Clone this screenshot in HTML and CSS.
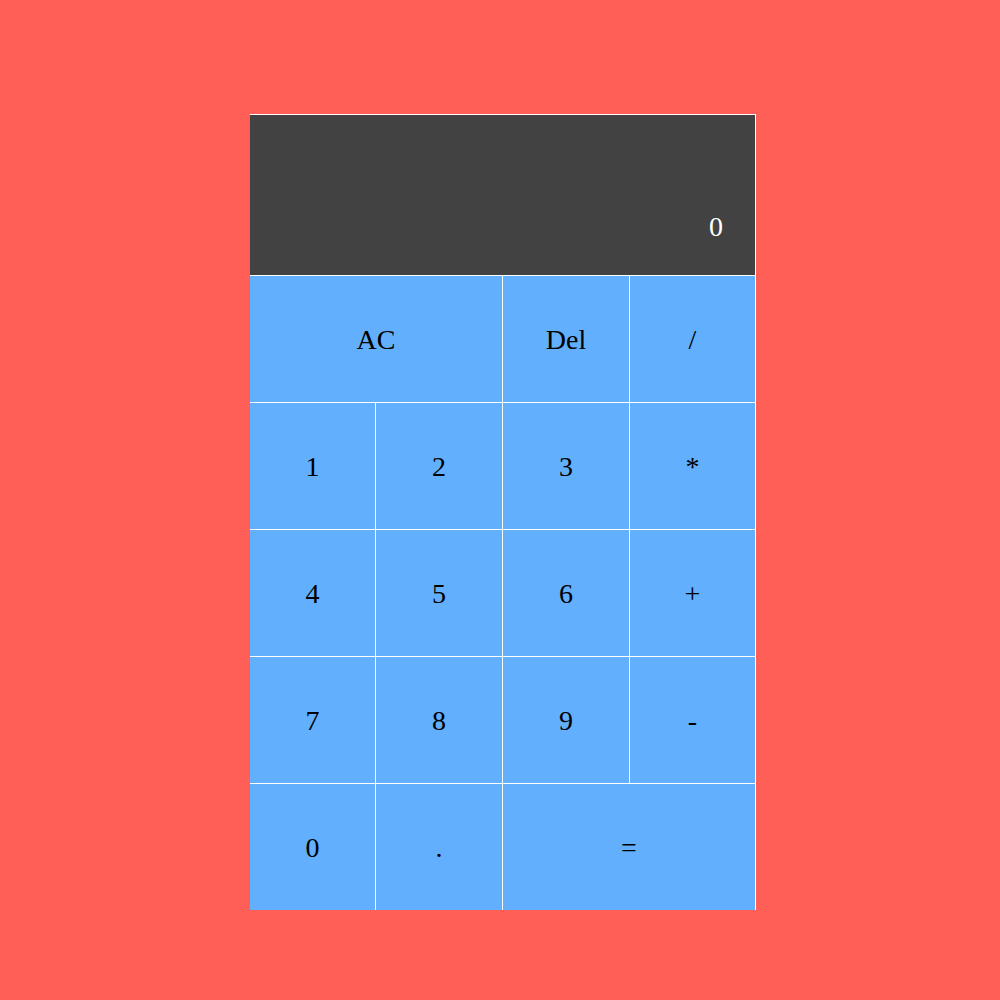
FILE: index.html
```html
<!DOCTYPE html>
<html>
<head>
<meta charset="utf-8">
<link rel="stylesheet" href="styles.css">
</head>
<body>
<div class="calc">
  <div class="display"><span class="current">0</span></div>
  <div class="key span2">AC</div>
  <div class="key">Del</div>
  <div class="key">/</div>
  <div class="key">1</div>
  <div class="key">2</div>
  <div class="key">3</div>
  <div class="key">*</div>
  <div class="key">4</div>
  <div class="key">5</div>
  <div class="key">6</div>
  <div class="key">+</div>
  <div class="key">7</div>
  <div class="key">8</div>
  <div class="key">9</div>
  <div class="key">-</div>
  <div class="key">0</div>
  <div class="key">.</div>
  <div class="key span2">=</div>
</div>
</body>
</html>
```
FILE: styles.css
```css
html, body {
  margin: 0;
  padding: 0;
}
body {
  background: #ff5f57;
  width: 1000px;
  height: 1000px;
  padding-top: 114px;
  padding-left: 250px;
  box-sizing: border-box;
  font-family: "Liberation Serif", "Times New Roman", serif;
}
.calc {
  display: grid;
  width: 506px;
  grid-template-columns: 126px 127px 127px 126px;
  grid-template-rows: 161px repeat(5, 127px);
}
.display {
  grid-column: 1 / -1;
  background: #424242;
  border-top: 1px solid #fff;
  border-right: 1px solid #fff;
  color: #fff;
  display: flex;
  justify-content: flex-end;
  align-items: flex-end;
  padding: 0 32px 32px 0;
  font-size: 28px;
}
.key {
  background: #62affe;
  border-top: 1px solid #fff;
  border-right: 1px solid #fff;
  display: flex;
  align-items: center;
  justify-content: center;
  padding-top: 2px;
  font-size: 28px;
  color: #000;
}
.span2 {
  grid-column: span 2;
}
```
